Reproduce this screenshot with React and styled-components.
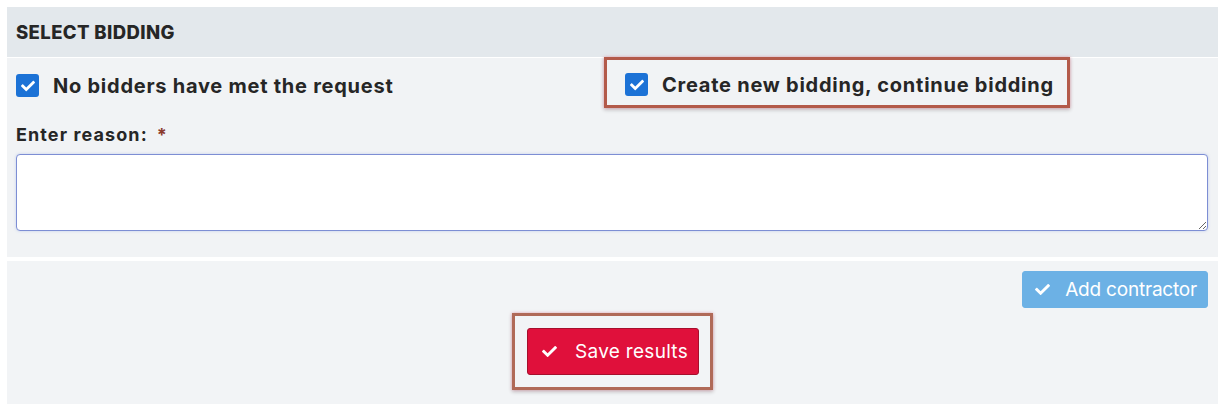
import React from 'react'
import styled, { createGlobalStyle } from 'styled-components'
import { FaCheck } from 'react-icons/fa'

const Global = createGlobalStyle`
  body {
    margin: 0;
    background: #fff;
    font-family: 'Inter', 'Liberation Sans', sans-serif;
    color: #2a2a2a;
  }
`

const Page = styled.div`
  padding: 7px 6px 0 7px;
`

const Panel = styled.div`
  display: flex;
  flex-direction: column;
  gap: 1px;
`

const Header = styled.div`
  height: 50px;
  background: #e3e8ec;
  display: flex;
  align-items: center;
  padding: 0 9px;
  font-weight: 800;
  font-size: 18.5px;
  letter-spacing: 0.4px;
  color: #262626;
`

const Body = styled.div`
  background: #f1f3f5;
  padding: 0 10px 26px 9px;
  margin-bottom: 3px;
`

const Options = styled.div`
  display: grid;
  grid-template-columns: 588px 1fr;
  align-items: center;
  margin-top: -1px;
`

const Option = styled.label`
  display: flex;
  align-items: center;
  gap: 14px;
  height: 51px;
  padding-top: 6px;
  box-sizing: border-box;
  font-weight: 700;
  font-size: 20px;
  letter-spacing: 0.75px;
  color: #262626;
  justify-self: start;
  ${p =>
    p.$marked &&
    `
    border: 3px solid #b35a4a;
    padding: 4px 13px 0 18px;
    box-shadow: 0 0 3px rgba(230, 140, 160, 0.7), 0 2px 4px rgba(0, 0, 0, 0.2);
  `}
`

const Box = styled.span`
  width: 23px;
  height: 23px;
  border-radius: 3px;
  background: #1c72d6;
  display: flex;
  align-items: center;
  justify-content: center;
  color: #fff;
  flex-shrink: 0;
`

const FieldLabel = styled.div`
  margin-top: 16px;
  font-weight: 700;
  font-size: 18px;
  letter-spacing: 1.1px;
  color: #262626;
  line-height: 22px;

  span {
    color: #8b3a2c;
    margin-left: 9px;
  }
`

const Reason = styled.textarea`
  display: block;
  width: 100%;
  box-sizing: border-box;
  height: 77px;
  margin-top: 8px;
  border: 1px solid #7d8ed4;
  border-radius: 4px;
  background: #fff;
  box-shadow: 0 0 3px rgba(110, 140, 220, 0.35);
  outline: none;
  font-family: inherit;
`

const Footer = styled.div`
  background: #f2f4f6;
  padding: 10px 10px 14px;
  display: flex;
  flex-direction: column;
  gap: 5px;
`

const Button = styled.button`
  display: flex;
  align-items: center;
  gap: ${p => p.$gap}px;
  border-radius: 3px;
  font-family: 'Inter', sans-serif;
  font-size: 19px;
  letter-spacing: ${p => p.$ls}px;
  color: #fff;
  cursor: pointer;
  background: ${p => p.$bg};
  border: 1px solid ${p => p.$edge};
  height: ${p => p.$h}px;
  padding: 0 10px 0 ${p => p.$pl}px;
  align-self: ${p => p.$align || 'auto'};
`

const Marker = styled.div`
  align-self: center;
  border: 3px solid #b06a58;
  padding: 12px 11px 12px 12px;
  box-shadow: 0 0 3px rgba(230, 140, 160, 0.7), 0 2px 4px rgba(0, 0, 0, 0.2);
`

export default function App() {
  return (
    <Page>
      <Global />
      <Panel>
        <Header>SELECT BIDDING</Header>
        <Body>
          <Options>
            <Option>
              <Box>
                <FaCheck size={14} />
              </Box>
              No bidders have met the request
            </Option>
            <Option $marked>
              <Box>
                <FaCheck size={14} />
              </Box>
              Create new bidding, continue bidding
            </Option>
          </Options>
          <FieldLabel>
            Enter reason:<span>*</span>
          </FieldLabel>
          <Reason />
        </Body>
        <Footer>
          <Button
            $bg="#6cb1e5"
            $edge="#6cb1e5"
            $h={37}
            $ls={-0.2}
            $gap={15}
            $pl={12}
            $align="flex-end"
          >
            <FaCheck size={15} />
            Add contractor
          </Button>
          <Marker>
            <Button $bg="#e0103b" $edge="#a50f2c" $h={47} $ls={0.3} $gap={18} $pl={14}>
              <FaCheck size={15} />
              Save results
            </Button>
          </Marker>
        </Footer>
      </Panel>
    </Page>
  )
}
